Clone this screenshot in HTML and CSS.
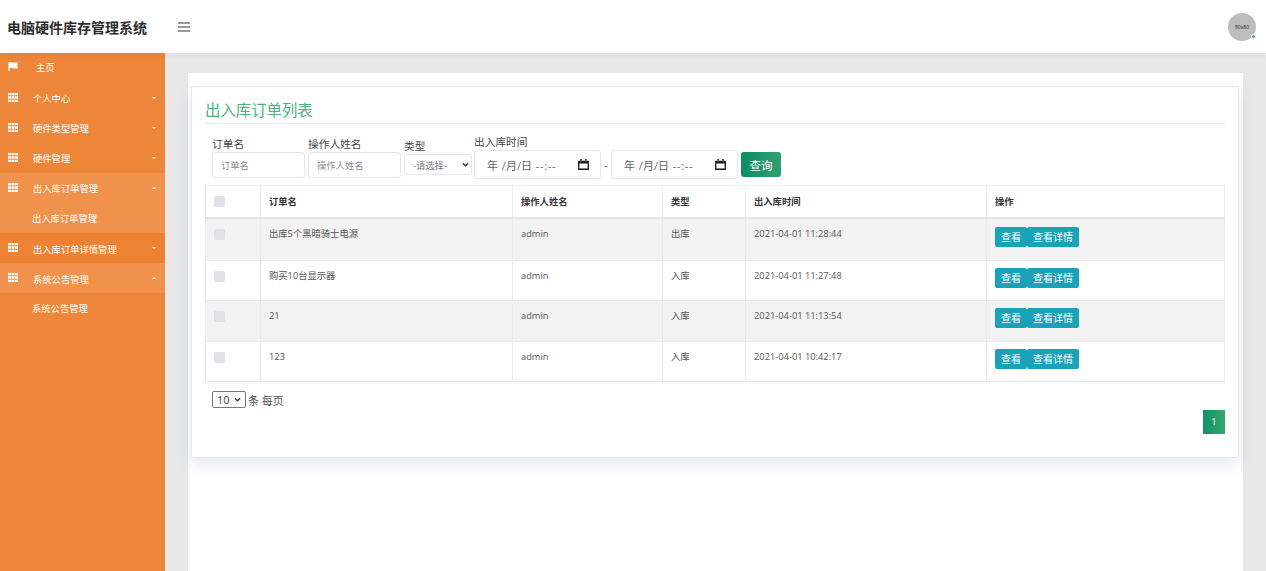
FILE: index.html
```html
<!doctype html>
<html lang="zh-CN">
  <head>
    <meta charset="UTF-8" />
    <title>电脑硬件库存管理系统</title>
    <link rel="stylesheet" href="styles.css">
  </head>
  <body>
    <svg class="icon-defs" width="0" height="0">
      <symbol id="i-grid" viewBox="0 0 10 9">
        <path d="M0 0h3v2.3H0zM3.5 0h3v2.3h-3zM7 0h3v2.3H7zM0 3.3h3v2.4H0zM3.5 3.3h3v2.4h-3zM7 3.3h3v2.4H7zM0 6.7h3V9H0zM3.5 6.7h3V9h-3zM7 6.7h3V9H7z" fill="currentColor" />
      </symbol>
      <symbol id="i-cal" viewBox="0 0 12 12">
        <path d="M1 2.5h10v8.5H1zM2.2 5v4.8h7.6V5zM3 1h1.4v2H3zM7.6 1H9v2H7.6z" fill="#1a1a1a" fill-rule="evenodd" />
      </symbol>
      <symbol id="i-chevron" viewBox="0 0 8 5">
        <path d="M1 1l3 3 3-3" fill="none" stroke="#333" stroke-width="1.500" />
      </symbol>
    </svg>

    <header class="topbar">
      <div class="brand">电脑硬件库存管理系统</div>
      <div class="menu-toggle"><span></span><span></span><span></span></div>
      <div class="avatar">80x80<i class="online"></i></div>
    </header>

    <div class="layout">
      <nav class="sidebar">
        <a class="nav-item home">
          <svg class="nav-icon" viewBox="0 0 10 9"><path d="M.4 0h1.300v.5C3.500-.3 5.300 1.400 9.600.3v5.900C5.300 7.300 3.500 5.500 1.700 6.200V9H.4z" fill="currentColor" /></svg>
          <span>主页</span>
        </a>
        <a class="nav-item"><svg class="nav-icon"><use href="#i-grid" /></svg><span>个人中心</span><i class="caret"></i></a>
        <a class="nav-item"><svg class="nav-icon"><use href="#i-grid" /></svg><span>硬件类型管理</span><i class="caret"></i></a>
        <a class="nav-item"><svg class="nav-icon"><use href="#i-grid" /></svg><span>硬件管理</span><i class="caret"></i></a>
        <a class="nav-item open"><svg class="nav-icon"><use href="#i-grid" /></svg><span>出入库订单管理</span><i class="caret up"></i></a>
        <a class="nav-sub open">出入库订单管理</a>
        <a class="nav-item dark"><svg class="nav-icon"><use href="#i-grid" /></svg><span>出入库订单详情管理</span><i class="caret"></i></a>
        <a class="nav-item open"><svg class="nav-icon"><use href="#i-grid" /></svg><span>系统公告管理</span><i class="caret up"></i></a>
        <a class="nav-sub">系统公告管理</a>
      </nav>

      <main class="content">
        <div class="panel">
          <section class="card">
            <h2 class="card-title">出入库订单列表</h2>

            <form class="filters">
              <div class="field">
                <label>订单名</label>
                <input class="text-input" placeholder="订单名" />
              </div>
              <div class="field">
                <label>操作人姓名</label>
                <input class="text-input" placeholder="操作人姓名" />
              </div>
              <div class="field field-type">
                <label>类型</label>
                <div class="type-select">-请选择-<svg><use href="#i-chevron" /></svg></div>
              </div>
              <div class="field">
                <label>出入库时间</label>
                <div class="date-input"><span>年 /月/日 <em>--:--</em></span><svg><use href="#i-cal" /></svg></div>
              </div>
              <span class="date-sep">-</span>
              <div class="date-input"><span>年 /月/日 <em>--:--</em></span><svg><use href="#i-cal" /></svg></div>
              <button class="search-btn" type="button">查询</button>
            </form>

            <table class="orders">
              <thead>
                <tr>
                  <th class="col-check"><i class="check"></i></th>
                  <th class="col-name">订单名</th>
                  <th class="col-user">操作人姓名</th>
                  <th class="col-type">类型</th>
                  <th class="col-time">出入库时间</th>
                  <th>操作</th>
                </tr>
              </thead>
              <tbody>
                <tr class="row-tall">
                  <td class="col-check"><i class="check"></i></td>
                  <td>出库5个黑暗骑士电源</td>
                  <td class="latin">admin</td>
                  <td>出库</td>
                  <td class="latin">2021-04-01 11:28:44</td>
                  <td><div class="actions"><a>查看</a><a>查看详情</a></div></td>
                </tr>
                <tr class="row-short">
                  <td class="col-check"><i class="check"></i></td>
                  <td>购买10台显示器</td>
                  <td class="latin">admin</td>
                  <td>入库</td>
                  <td class="latin">2021-04-01 11:27:48</td>
                  <td><div class="actions"><a>查看</a><a>查看详情</a></div></td>
                </tr>
                <tr>
                  <td class="col-check"><i class="check"></i></td>
                  <td class="latin">21</td>
                  <td class="latin">admin</td>
                  <td>入库</td>
                  <td class="latin">2021-04-01 11:13:54</td>
                  <td><div class="actions"><a>查看</a><a>查看详情</a></div></td>
                </tr>
                <tr class="row-short">
                  <td class="col-check"><i class="check"></i></td>
                  <td class="latin">123</td>
                  <td class="latin">admin</td>
                  <td>入库</td>
                  <td class="latin">2021-04-01 10:42:17</td>
                  <td><div class="actions"><a>查看</a><a>查看详情</a></div></td>
                </tr>
              </tbody>
            </table>

            <div class="page-size">
              <div class="page-select">10<svg><use href="#i-chevron" /></svg></div>
              <span>条 每页</span>
            </div>

            <div class="pager"><a>1</a></div>
          </section>
        </div>
      </main>
    </div>
  </body>
</html>
```

FILE: styles.css
```css
html,
body {
  margin: 0;
  height: 571px;
  overflow: hidden;
}

body {
  background: #e8e8e8;
  color: #444;
  font-family: 'Open Sans', 'Noto Sans CJK SC', sans-serif;
}

.icon-defs {
  display: block;
  height: 0;
}

.topbar {
  display: flex;
  align-items: center;
  position: relative;
  z-index: 2;
  box-shadow: 0 1px 6px rgba(0, 0, 0, 0.06);
  background: #fff;
  padding: 0 10px 0 7px;
  height: 53px;
}

.brand {
  width: 171px;
  color: #2b2b2b;
  font-weight: 700;
  font-size: 14px;
}

.menu-toggle {
  display: flex;
  flex-direction: column;
  gap: 2px;
}

.menu-toggle span {
  display: block;
  background: #999;
  width: 12px;
  height: 2px;
}

.avatar {
  position: relative;
  margin-left: auto;
  border-radius: 50%;
  background: #bdbdbd;
  width: 28px;
  height: 28px;
  color: #222;
  font-size: 5px;
  line-height: 28px;
  text-align: center;
}

.online {
  position: absolute;
  right: 0;
  bottom: 2px;
  border: 1px solid #fff;
  border-radius: 50%;
  background: #4caf72;
  width: 3px;
  height: 3px;
}

.layout {
  display: flex;
  height: 518px;
}

.sidebar {
  flex: none;
  background: #ee8639;
  width: 165px;
  color: #fff;
  font-size: 9.300px;
}

.nav-item {
  display: flex;
  align-items: center;
  padding: 0 9px 0 8px;
  height: 30px;
}

.nav-item span {
  flex: 1;
  margin-left: 15px;
}

.nav-item.home span {
  margin-top: -2px;
  margin-left: 18px;
}

.nav-item.open {
  background: #f0914c;
}

.nav-item.dark {
  background: #ed8234;
}

.nav-item.dark span,
.nav-item.dark + .nav-item span {
  margin-top: 2px;
}

.nav-icon {
  flex: none;
  margin-top: -2px;
  width: 10px;
  height: 9px;
}

.nav-item.home .nav-icon {
  margin-top: -4px;
}

.caret {
  border-top: 2.500px solid #fff;
  border-right: 2.500px solid transparent;
  border-left: 2.500px solid transparent;
}

.caret.up {
  border-top: 0;
  border-bottom: 2.500px solid #fff;
}

.nav-sub {
  display: block;
  padding-left: 32px;
  height: 30px;
  line-height: 31px;
}

.nav-sub.open {
  background: #f0914c;
}

.content {
  flex: 1;
  padding: 20px 23px 0;
}

.panel {
  background: #fff;
  padding: 13px 4px 0 3px;
  height: 100%;
  box-sizing: border-box;
}

.card {
  box-sizing: border-box;
  box-shadow: 0 6px 14px rgba(90, 110, 170, 0.16);
  border: 1px solid #e6e9ee;
  border-radius: 2px;
  padding: 0 13px;
  height: 372px;
}

.card-title {
  margin: 0;
  border-bottom: 1px solid #e9ecef;
  padding-top: 13px;
  height: 23px;
  color: #4db27d;
  font-weight: 400;
  font-size: 15.400px;
  line-height: 21px;
}

.filters {
  display: flex;
  align-items: flex-end;
  margin: 11px 0 6px;
  padding-left: 7px;
  height: 44px;
}

.field {
  display: flex;
  flex-direction: column;
  margin-right: 3px;
  margin-bottom: 1px;
  color: #444;
  font-size: 10.700px;
}

.field label {
  line-height: 14px;
}

.field:nth-child(4) {
  margin-right: 0;
  margin-bottom: 0;
}

.field-type {
  margin-right: 2px;
  margin-bottom: 4px;
}

.text-input {
  box-sizing: border-box;
  margin-top: 1px;
  outline: none;
  border: 1px solid #e4e6ea;
  border-radius: 3px;
  padding: 0 8px;
  width: 93px;
  height: 26px;
  font-size: 9.300px;
  font-family: inherit;
}

.text-input::placeholder {
  color: #8a8f96;
}

.type-select {
  display: flex;
  justify-content: space-between;
  align-items: center;
  box-sizing: border-box;
  margin-top: 1px;
  border: 1px solid #e4e6ea;
  border-radius: 3px;
  padding: 0 2px 0 8px;
  width: 68px;
  height: 21px;
  color: #777;
  font-size: 9.300px;
}

.type-select svg,
.page-select svg {
  width: 7px;
  height: 5px;
}

.date-input {
  display: flex;
  justify-content: space-between;
  align-items: center;
  box-sizing: border-box;
  border: 1px solid #e4e6ea;
  border-radius: 3px;
  padding: 0 10px 0 12px;
  width: 127px;
  height: 29px;
  color: #666;
  font-size: 11px;
  word-spacing: 1px;
}

.date-input em {
  font-style: normal;
  letter-spacing: 0.7px;
}

.date-input svg {
  width: 13px;
  height: 13px;
}

.field .date-input {
  margin-top: 1px;
}

.date-sep {
  align-self: flex-end;
  width: 10px;
  color: #555;
  font-size: 11px;
  line-height: 29px;
  text-align: center;
}

.search-btn {
  margin-bottom: 2px;
  margin-left: 3px;
  border: none;
  border-radius: 3px;
  background: linear-gradient(90deg, #0e8c66, #2fa06f);
  padding: 0;
  width: 40px;
  height: 25px;
  color: #fff;
  font-size: 11.500px;
  font-family: inherit;
}

.orders {
  table-layout: fixed;
  border-collapse: collapse;
  width: 1020px;
  color: #555;
  font-size: 9.300px;
}

.orders th,
.orders td {
  box-sizing: border-box;
  border: 1px solid #e9ecef;
  padding: 0 8px;
  text-align: left;
}

.orders th {
  border-top-color: #f1f3f5;
  border-bottom: 2px solid #e6e6e6;
  height: 32px;
  color: #333;
  font-weight: 700;
}

.orders td {
  vertical-align: top;
  padding-top: 7px;
  height: 41px;
}

.orders td.latin {
  padding-top: 8px;
}

.orders .row-tall td {
  height: 43px;
}

.orders .row-short td {
  height: 40px;
}

.orders tbody tr:nth-child(odd) {
  background: #f2f2f2;
}

.col-check {
  width: 55px;
}

.col-name {
  width: 252px;
}

.col-user {
  width: 150px;
}

.col-type {
  width: 83px;
}

.col-time {
  width: 241px;
}

.check {
  display: block;
  border-radius: 2px;
  background: #dee2e6;
  width: 11px;
  height: 11px;
}

.orders td .check {
  margin-top: 3px;
}

.actions {
  display: flex;
}

.row-tall .actions {
  margin-top: 1px;
}

.actions a {
  border-radius: 2px;
  background: #1aa3b8;
  padding: 0 6px;
  color: #fff;
  font-size: 10px;
  line-height: 20px;
}

.page-size {
  display: flex;
  align-items: center;
  gap: 2px;
  margin-top: 9px;
  padding-left: 7px;
  color: #555;
  font-size: 11px;
}

.page-select {
  display: flex;
  justify-content: space-between;
  align-items: center;
  box-sizing: border-box;
  border: 1px solid #777;
  border-radius: 2px;
  padding: 0 4px 0 4px;
  width: 34px;
  height: 17px;
  color: #444;
}

.pager {
  display: flex;
  justify-content: flex-end;
  margin-top: 2px;
}

.pager a {
  background: linear-gradient(90deg, #11906a, #38a96e);
  width: 22px;
  color: #fff;
  font-size: 9.500px;
  line-height: 24px;
  text-align: center;
}
```
